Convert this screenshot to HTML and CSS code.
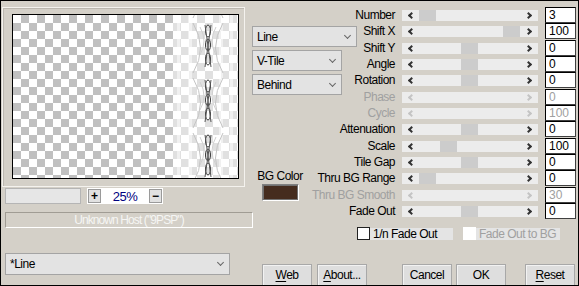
FILE: index.html
```html
<!DOCTYPE html>
<html lang="en">

<head>
  <meta charset="UTF-8">
  <meta name="viewport" content="width=device-width, initial-scale=1">
  <title>Kaleidoscope Filter</title>
  <link rel="stylesheet" href="styles.css">
</head>

<body>

  <div class="dialog">
    <div class="left">
      <div class="group">
        <div class="preview">
          <div class="fx">
            <svg width="65" height="163" viewBox="0 0 65 163">
              <defs>
                <pattern id="chain" x="0" y="6" width="65" height="55" patternUnits="userSpaceOnUse">
                  <path d="M20 2 Q35 27 20 52 M50 2 Q35 27 50 52" stroke="#c4c4c4" fill="none"/>
                  <path d="M27 6 Q35 20 27 34 M43 6 Q35 20 43 34" stroke="#d0d0d0" fill="none"/>
                  <ellipse cx="35" cy="10" rx="2.5" ry="6" stroke="#3c3c3c" fill="none"/>
                  <ellipse cx="35" cy="24" rx="2.5" ry="6" stroke="#3c3c3c" fill="none"/>
                  <ellipse cx="35" cy="38" rx="2.5" ry="6" stroke="#3c3c3c" fill="none"/>
                  <path d="M32 4 L38 46 M38 4 L32 46" stroke="#555" fill="none"/>
                </pattern>
              </defs>
              <rect x="0" y="0" width="65" height="163" fill="#fff" opacity="0.5"/>
              <rect x="4" y="0" width="3" height="163" fill="#fff" opacity="0.5"/>
              <rect x="15" y="0" width="4" height="163" fill="#fff" opacity="0.5"/>
              <rect x="46" y="0" width="4" height="163" fill="#fff" opacity="0.5"/>
              <rect x="57" y="0" width="3" height="163" fill="#fff" opacity="0.5"/>
              <rect x="0" y="0" width="65" height="163" fill="url(#chain)"/>
            </svg>
          </div>
        </div>
      </div>

      <div class="zoom-row">
        <div class="blank"></div>
        <div class="zoom">
          <span class="zbtn">+</span>
          <span class="zval">25%</span>
          <span class="zbtn">&minus;</span>
        </div>
      </div>

      <div class="host">Unknown Host ("9PSP")</div>

      <div class="combo wide">*Line<i class="chev"></i></div>
    </div>

    <div class="right">
      <div class="upper">
        <div class="side">
          <div class="combo">Line<i class="chev"></i></div>
          <div class="combo short">V-Tile<i class="chev"></i></div>
          <div class="combo short">Behind<i class="chev"></i></div>
          <div class="bg">
            <span>BG Color</span>
            <span class="swatch"></span>
          </div>
        </div>

        <div class="params">
          <span class="lbl">Number</span>
          <div class="sb"><i class="arr l"></i><div class="trough"><b class="thumb" style="margin-left:0px"></b></div><i class="arr r"></i></div>
          <span class="num">3</span>

          <span class="lbl">Shift X</span>
          <div class="sb"><i class="arr l"></i><div class="trough"><b class="thumb" style="margin-left:84px"></b></div><i class="arr r"></i></div>
          <span class="num">100</span>

          <span class="lbl">Shift Y</span>
          <div class="sb"><i class="arr l"></i><div class="trough"><b class="thumb" style="margin-left:42px"></b></div><i class="arr r"></i></div>
          <span class="num">0</span>

          <span class="lbl">Angle</span>
          <div class="sb"><i class="arr l"></i><div class="trough"><b class="thumb" style="margin-left:42px"></b></div><i class="arr r"></i></div>
          <span class="num">0</span>

          <span class="lbl">Rotation</span>
          <div class="sb"><i class="arr l"></i><div class="trough"><b class="thumb" style="margin-left:42px"></b></div><i class="arr r"></i></div>
          <span class="num">0</span>

          <span class="lbl off">Phase</span>
          <div class="sb off"><i class="arr l"></i><div class="trough"></div><i class="arr r"></i></div>
          <span class="num off">0</span>

          <span class="lbl off">Cycle</span>
          <div class="sb off"><i class="arr l"></i><div class="trough"></div><i class="arr r"></i></div>
          <span class="num off">100</span>

          <span class="lbl">Attenuation</span>
          <div class="sb"><i class="arr l"></i><div class="trough"><b class="thumb" style="margin-left:42px"></b></div><i class="arr r"></i></div>
          <span class="num">0</span>

          <span class="lbl">Scale</span>
          <div class="sb"><i class="arr l"></i><div class="trough"><b class="thumb" style="margin-left:21px"></b></div><i class="arr r"></i></div>
          <span class="num">100</span>

          <span class="lbl">Tile Gap</span>
          <div class="sb"><i class="arr l"></i><div class="trough"><b class="thumb" style="margin-left:42px"></b></div><i class="arr r"></i></div>
          <span class="num">0</span>

          <span class="lbl">Thru BG Range</span>
          <div class="sb"><i class="arr l"></i><div class="trough"><b class="thumb" style="margin-left:0px"></b></div><i class="arr r"></i></div>
          <span class="num">0</span>

          <span class="lbl off">Thru BG Smooth</span>
          <div class="sb off"><i class="arr l"></i><div class="trough"></div><i class="arr r"></i></div>
          <span class="num off">30</span>

          <span class="lbl">Fade Out</span>
          <div class="sb"><i class="arr l"></i><div class="trough"><b class="thumb" style="margin-left:42px"></b></div><i class="arr r"></i></div>
          <span class="num">0</span>
        </div>
      </div>

      <div class="checks">
        <label class="check"><span class="box"></span><span class="clabel">1/n Fade Out</span></label>
        <label class="check off"><span class="box"></span><span class="clabel">Fade Out to BG</span></label>
      </div>

      <div class="buttons">
        <span class="btn web"><u>W</u>eb</span>
        <span class="btn about"><u>A</u>bout...</span>
        <span class="btn cancel">Cancel</span>
        <span class="btn ok">OK</span>
        <span class="btn reset"><u>R</u>eset</span>
      </div>
    </div>
  </div>

</body>

</html>
```

FILE: styles.css
```css
html, body {
  margin: 0;
  padding: 0;
}

body {
  background: #d4d0c8;
  color: #000;
  font-family: "Liberation Sans", Arial, sans-serif;
  font-size: 12px;
  letter-spacing: -0.5px;
}

.dialog {
  background: #d4d0c8;
  border: 1px solid #000;
  box-sizing: border-box;
  display: grid;
  grid-template-columns: 250px 1fr;
  height: 286px;
  overflow: hidden;
  width: 579px;
}

/* left side */

.left {
  display: flex;
  flex-direction: column;
  align-items: flex-start;
}

.group {
  border: 1px solid #f4f2ee;
  box-shadow: inset 1px 1px 0 #bcb8b0;
  box-sizing: border-box;
  height: 180px;
  margin: 6px 0 0 1px;
  padding: 6px 0 0 9px;
  width: 243px;
}

.preview {
  background: repeating-conic-gradient(#c0c0c0 0 25%, #fff 0 50%) 0 0 / 16px 16px;
  border: 1px solid #000;
  box-sizing: border-box;
  height: 165px;
  position: relative;
  width: 227px;
}

.fx {
  bottom: 0;
  position: absolute;
  right: 0;
  top: 0;
  width: 65px;
}

.fx svg {
  display: block;
}

.zoom-row {
  display: flex;
  gap: 6px;
  height: 16px;
  margin: 1px 0 0 4px;
}

.blank {
  background: #e6e6e6;
  border: 1px solid #b5b5b5;
  box-sizing: border-box;
  width: 76px;
}

.zoom {
  align-items: center;
  background: #fff;
  box-sizing: border-box;
  display: flex;
  padding: 0 1px;
  width: 76px;
}

.zbtn {
  align-items: center;
  background: #e1e1e1;
  border: 1px solid #9a9a9a;
  box-sizing: border-box;
  display: flex;
  font-weight: bold;
  height: 14px;
  justify-content: center;
  letter-spacing: 0;
  line-height: 1;
  width: 13px;
}

.zval {
  color: #000080;
  flex: 1;
  font-size: 13px;
  text-align: center;
}

.host {
  border: 1px solid;
  border-color: #a09c94 #fff #fff #a09c94;
  box-sizing: border-box;
  color: #f6f6f4;
  height: 16px;
  letter-spacing: -0.9px;
  line-height: 14px;
  margin: 8px 0 0 4px;
  text-align: center;
  width: 248px;
}

.combo {
  align-items: center;
  background: #e3e3e3;
  border: 1px solid #a4a4a4;
  box-sizing: border-box;
  display: flex;
  height: 21px;
  padding-left: 4px;
  width: 105px;
}

.combo.short {
  width: 90px;
}

.combo.wide {
  height: 22px;
  margin: 25px 0 0 4px;
  width: 225px;
}

.chev {
  border: solid #666;
  border-width: 0 1px 1px 0;
  height: 4px;
  margin: -3px 6px 0 auto;
  transform: rotate(45deg);
  width: 4px;
}

/* right side */

.right {
  display: flex;
  flex-direction: column;
  align-items: flex-start;
}

.upper {
  display: grid;
  width: 100%;
}

.side,
.params {
  grid-area: 1 / 1;
}

.side {
  align-items: flex-start;
  display: flex;
  flex-direction: column;
  gap: 3px;
  justify-self: start;
  margin: 25px 0 0 1px;
}

.bg {
  align-items: center;
  display: flex;
  flex-direction: column;
  line-height: 16px;
  margin: 70px 0 0 4px;
  white-space: nowrap;
  width: 48px;
}

.swatch {
  background: #452c1e;
  border: 1px solid;
  border-color: #808080 #fff #fff #808080;
  box-shadow: inset 0 0 0 1px #707070;
  box-sizing: border-box;
  height: 17px;
  width: 37px;
}

.params {
  column-gap: 7px;
  display: grid;
  grid-auto-rows: 16.33px;
  grid-template-columns: auto 136px 31px;
  justify-self: end;
  margin: 6px 2px 0 0;
}

.lbl {
  line-height: 16px;
  text-align: right;
  white-space: nowrap;
}

.off {
  color: #a0a0a0;
}

.sb {
  background: #ececec;
  display: flex;
  height: 11px;
  margin-top: 3px;
}

.trough {
  flex: 1;
}

.thumb {
  background: #cccccc;
  display: block;
  height: 100%;
  width: 17px;
}

.arr {
  align-items: center;
  display: flex;
  justify-content: center;
  width: 17px;
}

.arr::before {
  border: solid #333;
  content: "";
  height: 3px;
  width: 3px;
}

.arr.l::before {
  border-width: 0 0 2px 2px;
  margin-left: 2px;
  transform: rotate(45deg);
}

.arr.r::before {
  border-width: 2px 2px 0 0;
  margin-right: 2px;
  transform: rotate(45deg);
}

.sb.off .arr::before {
  border-color: #c4c4c4;
}

.num {
  background: #fff;
  border: 1px solid;
  border-color: #000 #404040 #404040 #000;
  box-sizing: border-box;
  height: 16px;
  letter-spacing: 0;
  line-height: 14px;
  padding-left: 3px;
}

.num.off {
  color: #a0a0a0;
}

.checks {
  display: flex;
  gap: 10px;
  margin: 8px 0 0 106px;
}

.check {
  align-items: center;
  display: flex;
}

.box {
  background: #fff;
  border: 1px solid #222;
  box-sizing: border-box;
  height: 13px;
  width: 13px;
}

.check.off .box {
  border-color: #fff;
}

.clabel {
  background: #e4e4e4;
  box-sizing: border-box;
  height: 12px;
  line-height: 12px;
  padding-left: 3px;
  white-space: nowrap;
  width: 83px;
}

.check.off .clabel {
  color: #a0a0a0;
  width: 84px;
}

.buttons {
  display: flex;
  margin-top: 24px;
}

.btn {
  background: #dedede;
  border: 1px solid #a8a8a8;
  box-shadow: inset 1px 1px 0 #f2f2f2;
  box-sizing: border-box;
  flex: none;
  height: 23px;
  line-height: 21px;
  text-align: center;
  width: 50px;
}

.btn u {
  text-underline-offset: 2px;
}

.web {
  margin-left: 11px;
}

.about {
  margin-left: 5px;
}

.cancel {
  margin-left: 35px;
}

.ok {
  margin-left: 4px;
}

.reset {
  margin-left: 19px;
}
```
